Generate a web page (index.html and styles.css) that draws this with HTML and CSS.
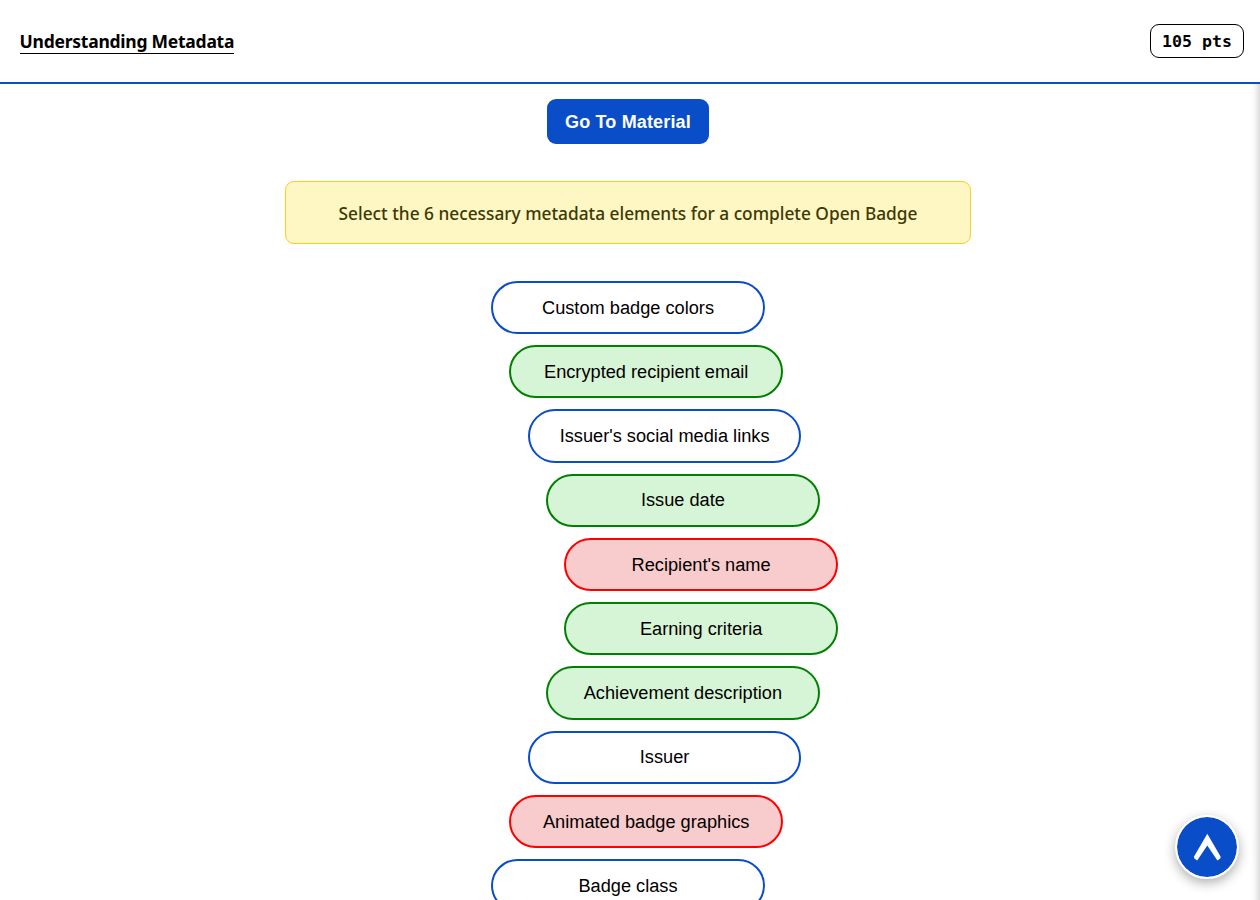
FILE: index.html
```html
<!DOCTYPE html>
<html lang="en">
<head>
<meta charset="utf-8">
<title>Understanding Metadata</title>
<link rel="stylesheet" href="styles.css">
</head>
<body>
<header class="topbar">
  <h1 class="title"><span class="title-text">Understanding Metadata</span></h1>
  <div class="points">105 pts</div>
</header>
<main class="content">
  <button class="material">Go To Material</button>
  <p class="prompt"><span class="prompt-text">Select the 6 necessary metadata elements for a complete Open Badge</span></p>
  <div class="options">
    <button class="option">Custom badge colors</button>
    <button class="option shift-1 correct">Encrypted recipient email</button>
    <button class="option shift-2">Issuer's social media links</button>
    <button class="option shift-3 correct">Issue date</button>
    <button class="option shift-4 wrong">Recipient's name</button>
    <button class="option shift-4 correct">Earning criteria</button>
    <button class="option shift-3 correct">Achievement description</button>
    <button class="option shift-2">Issuer</button>
    <button class="option shift-1 wrong">Animated badge graphics</button>
    <button class="option">Badge class</button>
  </div>
</main>
<div class="edge"></div>
<button class="to-top" aria-label="Back to top">
  <svg width="60" height="60" viewBox="0 0 60 60"><path d="M30.3 16.8L43.7 39.8L43.2 41.5L40.4 43.6L30.3 28.4L20.2 43.6L17.4 41.5L16.9 39.8Z" fill="#fff"/></svg>
</button>
</body>
</html>
```
FILE: styles.css
```css
* { box-sizing: border-box; }
body {
  margin: 0;
  height: 900px;
  overflow: hidden;
  background: #fff;
  color: #000;
  font-family: "Noto Sans", "Open Sans", sans-serif;
}
button { font-family: "Liberation Sans", Arial, sans-serif; }
.topbar {
  display: flex;
  justify-content: space-between;
  align-items: center;
  height: 84px;
  padding: 0 16px 0 19.6px;
  border-bottom: 2px solid #0a4dc8;
}
.title {
  margin: 0;
  height: 25px;
  width: 214.4px;
  border-bottom: 1px solid #000;
  font-size: 17.5px;
  line-height: 25px;
  font-weight: 700;
  white-space: nowrap;
}
.title-text { letter-spacing: -0.25px; }
.points {
  width: 94px;
  height: 34px;
  border: 1px solid #000;
  border-radius: 9px;
  font: 700 16.6px/34px "DejaVu Sans Mono", monospace;
  text-align: center;
}
.content {
  display: flex;
  flex-direction: column;
  align-items: center;
  width: 1256px;
  padding-top: 15px;
}
.material {
  width: 162px;
  height: 45px;
  padding: 1px 0 0;
  border: 0;
  border-radius: 9px;
  background: #0a4dc8;
  color: #fff;
  font-size: 18px;
  font-weight: 700;
  letter-spacing: 0.15px;
}
.prompt {
  width: 686px;
  height: 63px;
  margin: 37px 0 36.75px;
  border: 1px solid #fccc1e;
  border-radius: 9px;
  background: #fef7c3;
  color: #3d3906;
  font-size: 17.3px;
  font-weight: 500;
  line-height: 63px;
  text-align: center;
  white-space: nowrap;
}
.options {
  display: flex;
  flex-direction: column;
  gap: 11.03px;
  width: 273.6px;
}
.option {
  flex: none;
  width: 273.6px;
  height: 53.25px;
  padding: 1.38px 0 0;
  border: 2px solid #0a4dc8;
  border-radius: 27px;
  background: #fff;
  color: #000;
  font-size: 18.22px;
  white-space: nowrap;
}
.shift-1 { margin-left: 18.2px; }
.shift-2 { margin-left: 36.6px; }
.shift-3 { margin-left: 54.9px; }
.shift-4 { margin-left: 73.1px; }
.correct { border-color: #008000; background: #d6f5d6; }
.wrong { border-color: #f00; background: #f8cbcc; }
.edge {
  position: fixed;
  top: 84px;
  right: -10px;
  bottom: -20px;
  width: 10px;
  box-shadow: 0 -10px 10px rgba(0, 0, 0, .3);
  clip-path: inset(0 0 0 -30px);
}
.to-top {
  position: fixed;
  right: 21px;
  bottom: 21px;
  width: 64px;
  height: 64px;
  padding: 0;
  border: 2px solid #fff;
  border-radius: 50%;
  background: #0a4dc8;
  background-clip: padding-box;
  box-shadow: 0 4px 12px rgba(0, 0, 0, .32);
}
.to-top svg { display: block; }
```
